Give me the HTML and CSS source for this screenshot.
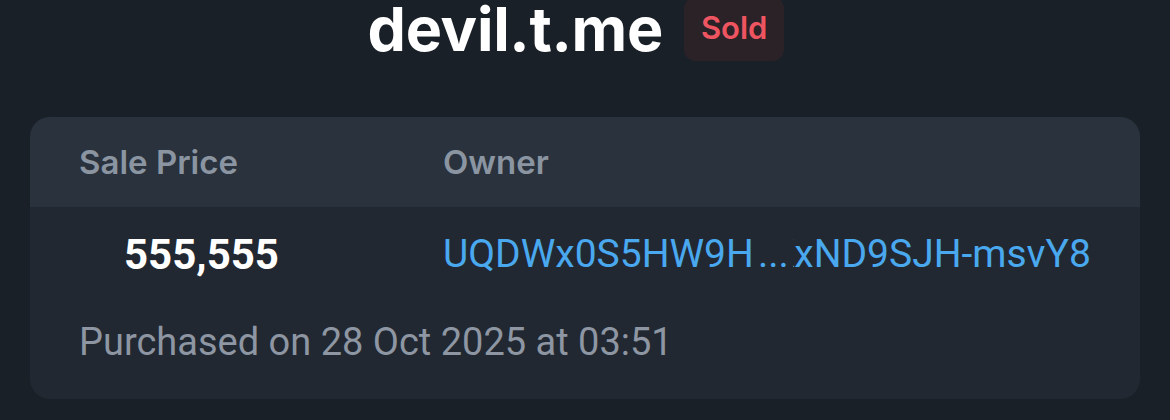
FILE: index.html
```html
<!DOCTYPE html>
<html lang="en">
<head>
    <meta charset="UTF-8">
    <meta name="viewport" content="width=device-width, initial-scale=1.0">
    <title>devil.t.me | Fragment</title>
    <link rel="stylesheet" href="styles.css">
</head>
<body>
    <header class="item-head">
        <h1 class="item-name">devil.t.me</h1>
        <span class="status sold">Sold</span>
    </header>

    <main>
        <section class="sale-card">
            <div class="sale-row sale-labels">
                <div>Sale Price</div>
                <div>Owner</div>
            </div>
            <div class="sale-row sale-values">
                <div class="price">555,555</div>
                <a class="owner" href="#">
                    <span class="addr-start">UQDWx0S5HW9HKbz3</span>
                    <span class="addr-dots">...</span>
                    <span class="addr-end">KxND9SJH-msvY8</span>
                </a>
            </div>
            <p class="sale-date">Purchased on 28 Oct 2025 at 03:51</p>
        </section>
    </main>
</body>
</html>
```

FILE: styles.css
```css
body {
    background-color: #1a2027;
    color: white;
    font-family: Roboto, "Noto Sans", sans-serif;
    margin: 0;
    padding: 0;
}

.item-head {
    display: flex;
    justify-content: center;
    align-items: center;
    gap: 21px;
    height: 62px;
    margin-top: -2px;
    padding-right: 18px;
}

.item-name {
    margin: 0;
    font-family: Inter, sans-serif;
    font-weight: 700;
    font-size: 61px;
    line-height: 56px;
    letter-spacing: -0.3px;
}

.status {
    display: block;
    padding: 0 17px;
    height: 64px;
    line-height: 62px;
    border-radius: 12px;
    font-family: Inter, sans-serif;
    font-weight: 600;
    font-size: 31px;
}

.sold {
    background-color: #2b2227;
    color: #ef5560;
}

.sale-card {
    margin: 57px 30px 0;
    background-color: #212831;
    border-radius: 20px;
    overflow: hidden;
}

.sale-row {
    display: grid;
    grid-template-columns: 364px 1fr;
    padding: 0 49px;
}

.sale-labels {
    height: 90px;
    align-items: center;
    background-color: #29323d;
    color: #8b95a2;
    font-family: Inter, sans-serif;
    font-weight: 600;
    font-size: 33px;
}

.sale-values {
    padding-top: 17px;
    height: 60px;
    align-items: center;
    font-size: 39px;
}

.price {
    padding-left: 45px;
    font-size: 42px;
    font-weight: 700;
}

.owner {
    display: flex;
    color: #4aa8ef;
    text-decoration: none;
    white-space: nowrap;
}

.addr-start {
    width: 310px;
    overflow: hidden;
}

.addr-dots {
    margin: 0 4px 0 5px;
}

.addr-end {
    width: 298px;
    overflow: hidden;
    text-align: right;
    direction: rtl;
}

.sale-date {
    margin: 28px 0 0;
    padding: 0 49px 27px;
    color: #8d96a2;
    font-size: 38px;
    line-height: 60px;
}
```
